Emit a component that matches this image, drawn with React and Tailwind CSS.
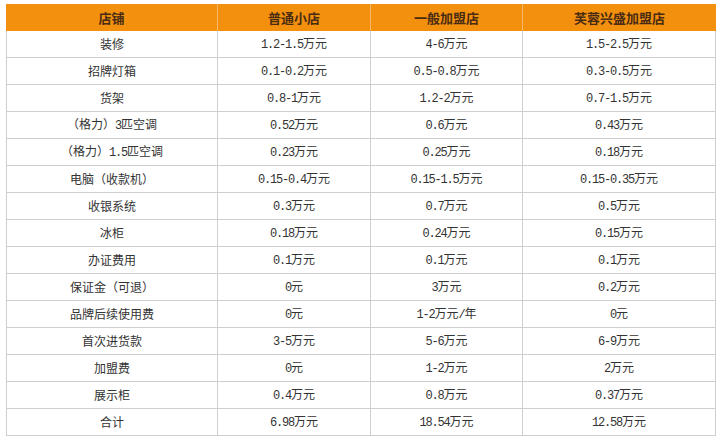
import React from "react";

const rows = [
  ["装修", "1.2-1.5万元", "4-6万元", "1.5-2.5万元"],
  ["招牌灯箱", "0.1-0.2万元", "0.5-0.8万元", "0.3-0.5万元"],
  ["货架", "0.8-1万元", "1.2-2万元", "0.7-1.5万元"],
  ["（格力）3匹空调", "0.52万元", "0.6万元", "0.43万元"],
  ["（格力）1.5匹空调", "0.23万元", "0.25万元", "0.18万元"],
  ["电脑（收款机）", "0.15-0.4万元", "0.15-1.5万元", "0.15-0.35万元"],
  ["收银系统", "0.3万元", "0.7万元", "0.5万元"],
  ["冰柜", "0.18万元", "0.24万元", "0.15万元"],
  ["办证费用", "0.1万元", "0.1万元", "0.1万元"],
  ["保证金（可退）", "0元", "3万元", "0.2万元"],
  ["品牌后续使用费", "0元", "1-2万元/年", "0元"],
  ["首次进货款", "3-5万元", "5-6万元", "6-9万元"],
  ["加盟费", "0元", "1-2万元", "2万元"],
  ["展示柜", "0.4万元", "0.8万元", "0.37万元"],
  ["合计", "6.98万元", "18.54万元", "12.58万元"],
];

const widths = ["w-[212px]", "w-[153px]", "w-[152px]", "w-[193px]"];

function Txt({ s }) {
  const parts = s.match(/[\x00-\x7f]+|[^\x00-\x7f]+/g) || [];
  return (
    <span className="whitespace-nowrap">
      {parts.map((p, i) =>
        /^[\x00-\x7f]+$/.test(p) ? (
          <span
            key={i}
            className="[font-family:'Liberation_Mono',monospace] tracking-[-1.2px] text-[12px]"
          >
            {p}
          </span>
        ) : (
          <span key={i}>{p}</span>
        )
      )}
    </span>
  );
}

export default function App() {
  return (
    <div className="w-[728px] h-[442px] bg-white pt-[4px] pl-[6px] [font-family:'Noto_Sans_CJK_SC',sans-serif]">
      <div className="flex flex-col w-[710px]">
        <div className="flex h-[27px] bg-[#f3910f]">
          {["店铺", "普通小店", "一般加盟店", "芙蓉兴盛加盟店"].map((h, i) => (
            <div
              key={i}
              className={`${widths[i]} h-[27px] flex items-center justify-center text-[13px] font-bold text-[#4a2c12] ${
                i < 3 ? "border-r border-[#f7b867]" : ""
              }`}
            >
              {h}
            </div>
          ))}
        </div>
        <div className="flex flex-col border-l border-[#cfcfcf]">
          {rows.map((r, ri) => (
            <div key={ri} className="flex h-[27px]">
              {r.map((c, ci) => (
                <div
                  key={ci}
                  className={`${
                    ci === 0 ? "w-[211px]" : widths[ci]
                  } h-[27px] flex items-center justify-center border-r border-b border-[#cfcfcf] text-[12px] text-[#333333]`}
                >
                  <Txt s={c} />
                </div>
              ))}
            </div>
          ))}
        </div>
      </div>
    </div>
  );
}
